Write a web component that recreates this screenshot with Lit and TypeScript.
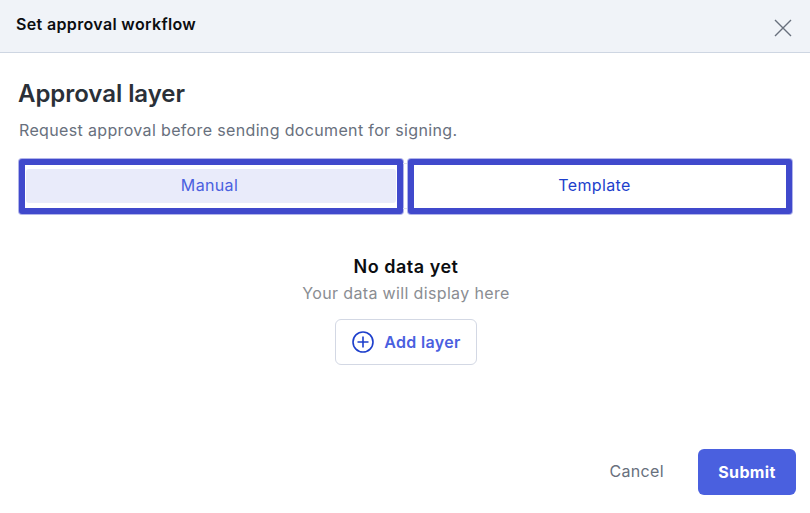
import { LitElement, html, css } from "lit";
import { customElement, state } from "lit/decorators.js";

@customElement("app-root")
export class AppRoot extends LitElement {
  @state() mode = "manual";

  static styles = css`
    :host {
      display: flex;
      flex-direction: column;
      width: 810px;
      height: 513px;
      background: #fff;
      font-family: Inter, "Liberation Sans", sans-serif;
      letter-spacing: 0.35px;
      overflow: hidden;
    }

    .header {
      display: flex;
      flex: none;
      justify-content: space-between;
      box-sizing: border-box;
      height: 53px;
      padding: 15px 18px 0 16px;
      background: #f0f3f8;
      border-bottom: 1px solid #ced6e2;
    }

    .header h2 {
      margin: 0;
      font-size: 16px;
      line-height: 19px;
      font-weight: 600;
      color: #0b0d10;
    }

    .close {
      width: 18px;
      height: 18px;
      margin-top: 4px;
      padding: 0;
      border: none;
      background: none;
      color: #68707d;
    }

    .close svg {
      display: block;
    }

    .body {
      flex: 1;
      display: flex;
      flex-direction: column;
      padding: 26px 18px 18px 19px;
    }

    h1 {
      margin: 0 0 0 -1px;
      font-size: 24px;
      line-height: 30px;
      font-weight: 600;
      letter-spacing: -0.05px;
      color: #2a3038;
    }

    .hint {
      margin: 11px 0 0;
      font-size: 16px;
      line-height: 20px;
      color: #68707d;
    }

    .tabs {
      display: grid;
      grid-template-columns: 384px 5px 384px;
      margin-top: 19px;
    }

    .tab {
      display: flex;
      box-sizing: border-box;
      height: 55px;
      padding: 0;
      border: 6px solid #4049cc;
      border-radius: 3px;
      box-shadow: 0 0 0 1px #b1b4ea;
      background: #fff;
      font: inherit;
      letter-spacing: inherit;
      font-size: 16px;
      color: #1d3fcc;
    }

    .tab span {
      flex: 1;
      margin: 4px 1px 5px;
      padding-right: 11px;
      border-radius: 3px;
      line-height: 32px;
      text-align: center;
    }

    .tab.active {
      color: #4a60df;
    }

    .tab.active span {
      padding-right: 3px;
      background: #e9ebfa;
    }

    .divider {
      margin: 4px 0 5px;
      border-top: 1px solid #dfe2ea;
      border-bottom: 1px solid #dfe2ea;
    }

    .empty {
      display: flex;
      flex-direction: column;
      align-items: center;
      margin-top: 42px;
      margin-right: -1px;
    }

    .empty h3 {
      margin: 0;
      font-size: 18px;
      line-height: 22px;
      font-weight: 600;
      letter-spacing: 0.5px;
      color: #0b0d10;
    }

    .empty p {
      margin: 5px 0 0;
      font-size: 16px;
      line-height: 20px;
      color: #8a8d92;
    }

    .add {
      display: flex;
      align-items: center;
      gap: 10px;
      box-sizing: border-box;
      height: 46px;
      margin-top: 16px;
      padding: 0 15px 0 16px;
      border: 1px solid #d3d8e4;
      border-radius: 6px;
      background: #fff;
      font: inherit;
      letter-spacing: inherit;
      font-size: 16px;
      font-weight: 600;
      color: #4a60df;
    }

    .footer {
      display: flex;
      align-items: center;
      justify-content: flex-end;
      gap: 34px;
      margin-top: auto;
      margin-right: -4px;
    }

    .cancel {
      padding: 0 0 2px;
      border: none;
      background: none;
      font: inherit;
      letter-spacing: inherit;
      font-size: 16px;
      color: #68707d;
    }

    .submit {
      width: 98px;
      height: 46px;
      border: none;
      border-radius: 6px;
      background: #4a60df;
      font: inherit;
      letter-spacing: inherit;
      font-size: 16px;
      font-weight: 700;
      color: #fff;
    }
  `;

  render() {
    return html`
      <div class="header">
        <h2>Set approval workflow</h2>
        <button class="close" aria-label="Close">
          <svg width="18" height="18" viewBox="0 0 18 18" fill="none" stroke="currentColor" stroke-width="1.4">
            <path d="M1 1l16 16M17 1L1 17" />
          </svg>
        </button>
      </div>
      <div class="body">
        <h1>Approval layer</h1>
        <p class="hint">Request approval before sending document for signing.</p>
        <div class="tabs">
          <button class="tab ${this.mode === "manual" ? "active" : ""}" @click=${() => (this.mode = "manual")}>
            <span>Manual</span>
          </button>
          <div class="divider"></div>
          <button class="tab ${this.mode === "template" ? "active" : ""}" @click=${() => (this.mode = "template")}>
            <span>Template</span>
          </button>
        </div>
        <div class="empty">
          <h3>No data yet</h3>
          <p>Your data will display here</p>
          <button class="add">
            <svg width="22" height="22" viewBox="0 0 22 22" fill="none" stroke="#1d3fcc" stroke-width="1.6">
              <circle cx="11" cy="11" r="10" />
              <path d="M11 5.5v11M5.5 11h11" />
            </svg>
            Add layer
          </button>
        </div>
        <div class="footer">
          <button class="cancel">Cancel</button>
          <button class="submit">Submit</button>
        </div>
      </div>
    `;
  }
}
